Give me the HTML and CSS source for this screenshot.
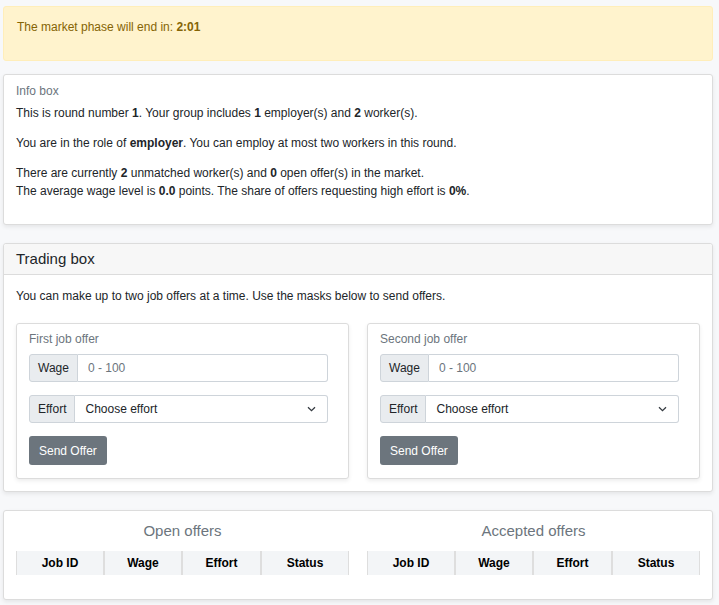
FILE: index.html
```html
<!DOCTYPE html>
<html lang="en">
<head>
<meta charset="utf-8">
<title>Market</title>
<link rel="stylesheet" href="styles.css">
</head>
<body>
<div class="page">
  <div class="alert">
    <p>The market phase will end in: <b>2:01</b></p>
  </div>

  <div class="card info-card">
    <div class="card-body info-body">
      <div class="card-title">Info box</div>
      <p>This is round number <b>1</b>. Your group includes <b>1</b> employer(s) and <b>2</b> worker(s).</p>
      <p>You are in the role of <b>employer</b>. You can employ at most two workers in this round.</p>
      <p>There are currently <b>2</b> unmatched worker(s) and <b>0</b> open offer(s) in the market.<br>The average wage level is <b>0.0</b> points. The share of offers requesting high effort is <b>0%</b>.</p>
    </div>
  </div>

  <div class="card trading-card">
    <div class="card-header">Trading box</div>
    <div class="trading-body">
      <p class="intro">You can make up to two job offers at a time. Use the masks below to send offers.</p>
      <div class="offer-grid">
        <div class="card offer-card">
          <div class="card-title">First job offer</div>
          <div class="input-group">
            <span class="addon">Wage</span>
            <input class="field" type="text" placeholder="0 - 100">
          </div>
          <div class="input-group">
            <span class="addon">Effort</span>
            <div class="field select">
              <span>Choose effort</span>
              <svg class="chev" width="9" height="6" viewBox="0 0 9 6"><path d="M1 1.2 L4.5 4.6 L8 1.2" fill="none" stroke="#343a40" stroke-width="1.3"/></svg>
            </div>
          </div>
          <button class="btn">Send Offer</button>
        </div>
        <div class="card offer-card">
          <div class="card-title">Second job offer</div>
          <div class="input-group">
            <span class="addon">Wage</span>
            <input class="field" type="text" placeholder="0 - 100">
          </div>
          <div class="input-group">
            <span class="addon">Effort</span>
            <div class="field select">
              <span>Choose effort</span>
              <svg class="chev" width="9" height="6" viewBox="0 0 9 6"><path d="M1 1.2 L4.5 4.6 L8 1.2" fill="none" stroke="#343a40" stroke-width="1.3"/></svg>
            </div>
          </div>
          <button class="btn">Send Offer</button>
        </div>
      </div>
    </div>
  </div>

  <div class="card tables-card">
    <div class="tables-grid">
      <div class="table-col">
        <div class="table-title">Open offers</div>
        <table class="offers">
          <thead><tr><th class="c1">Job ID</th><th class="c2">Wage</th><th class="c3">Effort</th><th class="c4">Status</th></tr></thead>
        </table>
      </div>
      <div class="table-col">
        <div class="table-title">Accepted offers</div>
        <table class="offers">
          <thead><tr><th class="c1">Job ID</th><th class="c2">Wage</th><th class="c3">Effort</th><th class="c4">Status</th></tr></thead>
        </table>
      </div>
    </div>
  </div>
</div>
</body>
</html>
```
FILE: styles.css
```css
html, body {
  margin: 0;
  padding: 0;
}
body {
  background: #f7f8fa;
  font-family: "Liberation Sans", Arial, sans-serif;
  font-size: 12px;
  line-height: 18px;
  color: #212529;
}
.page {
  padding: 6px 6px 6px 3px;
}
p {
  margin: 0 0 12px;
}
b {
  font-weight: bold;
}

.alert {
  background: #fff3cd;
  border: 1px solid #ffeeba;
  color: #856404;
  border-radius: 3px;
  padding: 11px 13px 12px;
  margin-bottom: 13px;
}
.alert p {
  margin-bottom: 12px;
}

.card {
  background: #fff;
  border: 1px solid #dcdcdc;
  border-radius: 3px;
  box-shadow: 0 2px 4px rgba(0, 0, 0, 0.075);
}
.card-title {
  color: #6c757d;
}

.info-card {
  margin-bottom: 18px;
}
.info-body {
  padding: 7px 12px 12px;
}
.info-body .card-title {
  margin-bottom: 4px;
}

.trading-card {
  margin-bottom: 18px;
}
.card-header {
  background: #f7f7f7;
  border-bottom: 1px solid #dcdcdc;
  padding: 4px 12px;
  font-size: 15px;
  line-height: 22px;
  border-radius: 3px 3px 0 0;
}
.trading-body {
  padding: 12px;
}
.intro {
  margin-bottom: 18px;
}
.offer-grid {
  display: grid;
  grid-template-columns: 1fr 1fr;
  column-gap: 18px;
}
.offer-card {
  padding: 6px 20px 13px 12px;
}
.offer-card .card-title {
  margin-bottom: 6px;
}
.input-group {
  display: flex;
  height: 28px;
  margin-bottom: 13px;
}
.addon {
  display: flex;
  align-items: center;
  background: #e9ecef;
  border: 1px solid #ced4da;
  border-radius: 3px 0 0 3px;
  padding: 0 8px;
  color: #212529;
}
.field {
  flex: 1;
  min-width: 0;
  box-sizing: border-box;
  height: 28px;
  border: 1px solid #ced4da;
  border-left: none;
  border-radius: 0 3px 3px 0;
  padding: 0 10px;
  font-family: inherit;
  font-size: 12px;
  color: #495057;
  background: #fff;
  outline: none;
}
.field::placeholder {
  color: #6c757d;
}
.select {
  display: flex;
  align-items: center;
  justify-content: space-between;
  color: #212529;
  padding-right: 11px;
}
.chev {
  display: block;
}
.btn {
  display: block;
  height: 29px;
  padding: 0 10px;
  background: #6c757d;
  color: #fff;
  border: none;
  border-radius: 3px;
  font-family: inherit;
  font-size: 12px;
}

.tables-card {
  padding: 9px 12px 12px;
}
.tables-grid {
  display: grid;
  grid-template-columns: 1fr 1fr;
  column-gap: 18px;
}
.table-title {
  text-align: center;
  font-size: 15px;
  line-height: 22px;
  color: #6c757d;
  margin-bottom: 9px;
}
.offers {
  width: 100%;
  border-collapse: separate;
  border-spacing: 0;
  margin-bottom: 12px;
  table-layout: fixed;
}
.offers th {
  height: 24px;
  padding: 0;
  background: #f3f5f7;
  border-left: 1px solid #dedede;
  border-right: 1px solid #dedede;
  font-weight: bold;
  color: #000;
  text-align: center;
}
.c1 { width: 86px; }
.c2 { width: 76px; }
.c3 { width: 77px; }
.c4 { width: auto; }
```
